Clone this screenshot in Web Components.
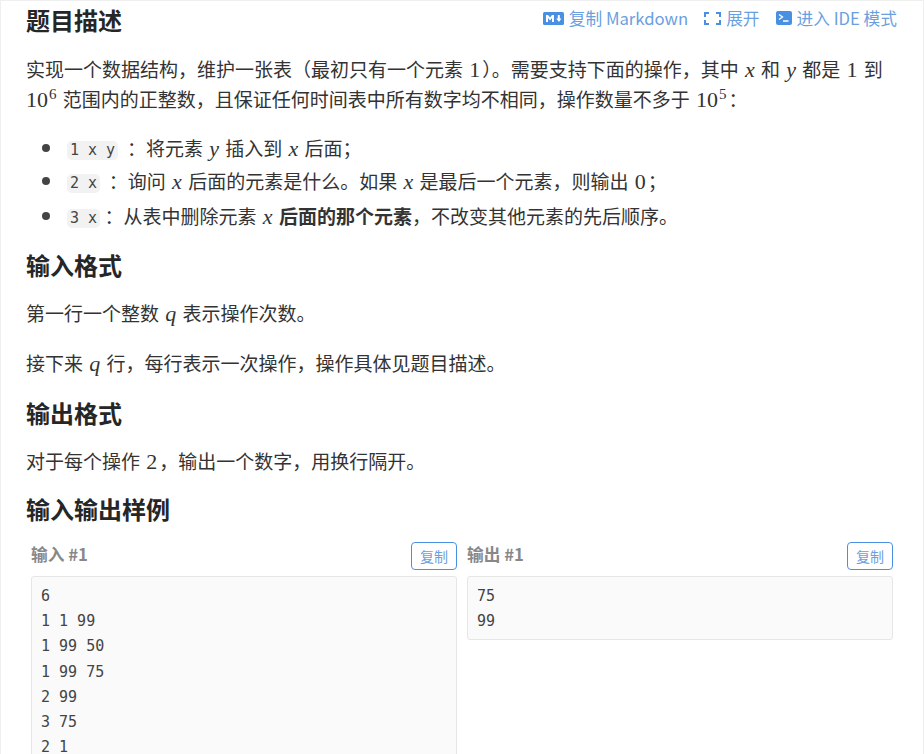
<!DOCTYPE html>
<html lang="zh">
<head>
<meta charset="utf-8">
<title>题目描述</title>
<style>
  html, body { margin: 0; height: 754px; overflow: hidden; background: #efefef; }
  body { font-family: "Noto Sans CJK SC", sans-serif; color: #333; }
</style>
</head>
<body>
<lg-card>
  <lg-heading style="--top:2px;--bottom:17px">题目描述
    <lg-action slot="actions" icon="md">复制 Markdown</lg-action>
    <lg-action slot="actions" icon="expand">展开</lg-action>
    <lg-action slot="actions" icon="term">进入 IDE 模式</lg-action>
  </lg-heading>
  <lg-para style="--after:18px">实现一个数据结构，维护一张表（最初只有一个元素 <lg-math upright>1</lg-math>）。需要支持下面的操作，其中 <lg-math>x</lg-math> 和 <lg-math>y</lg-math> 都是 <lg-math upright>1</lg-math> 到 <lg-math upright style="padding-left:0">10<sup>6</sup></lg-math> 范围内的正整数，且保证任何时间表中所有数字均不相同，操作数量不多于 <lg-math upright>10<sup>5</sup></lg-math>：</lg-para>
  <lg-bullets>
    <lg-bullet><lg-code>1 x y</lg-code> ：将元素 <lg-math>y</lg-math> 插入到 <lg-math>x</lg-math> 后面；</lg-bullet>
    <lg-bullet style="--shift:-1px"><lg-code>2 x</lg-code> ：询问 <lg-math>x</lg-math> 后面的元素是什么。如果 <lg-math>x</lg-math> 是最后一个元素，则输出 <lg-math upright>0</lg-math>；</lg-bullet>
    <lg-bullet style="--shift:1px"><lg-code>3 x</lg-code>：从表中删除元素 <lg-math>x</lg-math> <b>后面的那个元素</b>，不改变其他元素的先后顺序。</lg-bullet>
  </lg-bullets>
  <lg-heading style="--bottom:16px">输入格式</lg-heading>
  <lg-para>第一行一个整数 <lg-math>q</lg-math> 表示操作次数。</lg-para>
  <lg-para>接下来 <lg-math>q</lg-math> 行，每行表示一次操作，操作具体见题目描述。</lg-para>
  <lg-heading style="--top:-1px;--bottom:16px">输出格式</lg-heading>
  <lg-para>对于每个操作 <lg-math upright>2</lg-math>，输出一个数字，用换行隔开。</lg-para>
  <lg-heading style="--top:-3.5px;--bottom:16px">输入输出样例</lg-heading>
  <lg-samples>
    <lg-sample title="输入 #1" tall>6
1 1 99
1 99 50
1 99 75
2 99
3 75
2 1</lg-sample>
    <lg-sample title="输出 #1">75
99</lg-sample>
  </lg-samples>
</lg-card>

<script>
  // small helper: every element gets an open shadow root from a string
  class Base extends HTMLElement {
    constructor() {
      super();
      this.attachShadow({ mode: 'open' });
    }
    connectedCallback() {
      this.shadowRoot.innerHTML = this.markup();
    }
  }

  customElements.define('lg-card', class extends Base {
    markup() {
      return `<style>
        :host { display: block; box-sizing: border-box; margin: 1px 1px 0 1px; padding: 0 26px 0 25px;
                height: 753px; overflow: hidden; background: #fff; }
      </style><slot></slot>`;
    }
  });

  const ICONS = {
    md: `<svg width="21" height="13" viewBox="0 0 21 13"><rect width="21" height="13" rx="1.5" fill="#4a90e2"/>
      <path d="M3 10V3h2l2 2.6L9 3h2v7H9V6L7 8.6 5 6v4zM13.2 6.5h1.6V3h2v3.5h1.6L16 10z" fill="#fff"/></svg>`,
    expand: `<svg width="17" height="13" viewBox="0 0 17 13" fill="none" stroke="#4a90e2" stroke-width="2"><path d="M5 1H1v4M12 1h4v4M5 12H1V8M12 12h4V8"/></svg>`,
    term: `<svg width="16" height="14" viewBox="0 0 16 14"><rect width="16" height="14" rx="2" fill="#4a90e2"/>
      <path d="M3 3.5 6.5 6 3 8.5M7 10h5.5" fill="none" stroke="#fff" stroke-width="1.3"/></svg>`,
  };

  customElements.define('lg-action', class extends Base {
    markup() {
      return `<style>
        :host { display: inline-flex; align-items: center; gap: 5px; font-size: 16.7px; font-weight: 400;
                line-height: 24px; color: #6a9fe0; white-space: nowrap; }
        svg { display: block; }
      </style>${ICONS[this.getAttribute('icon')]}<slot></slot>`;
    }
  });

  customElements.define('lg-heading', class extends Base {
    markup() {
      return `<style>
        :host { display: flex; justify-content: space-between; align-items: flex-start;
                font-size: 24px; font-weight: 700; line-height: 34px; color: #262626;
                margin: var(--top, 0) 0 var(--bottom, 13px) 0; }
        .acts { display: flex; gap: 16px; padding: 3px 0 0 0; }
      </style><span><slot></slot></span><span class="acts"><slot name="actions"></slot></span>`;
    }
  });

  customElements.define('lg-para', class extends Base {
    markup() {
      return `<style>
        :host { display: block; font-size: 19px; line-height: 29.5px; color: #333; margin-bottom: var(--after, 20px); }
      </style><slot></slot>`;
    }
  });

  customElements.define('lg-math', class extends Base {
    markup() {
      return `<style>
        :host { font-family: "Liberation Serif", serif; font-size: 22px; line-height: 1; padding: 0 2px;
                font-style: ${this.hasAttribute('upright') ? 'normal' : 'italic'}; }
        ::slotted(sup) { font-size: 15px; line-height: 0; vertical-align: 8px; margin-left: 1px; }
      </style><slot></slot>`;
    }
  });

  customElements.define('lg-code', class extends Base {
    markup() {
      return `<style>
        :host { display: inline-block; font-family: "DejaVu Sans Mono", monospace; font-size: 15px;
                line-height: 19px; padding: 0 3px; background: #f2f2f2; border-radius: 5px;
                color: #444; margin-right: 4.5px; vertical-align: 1px; }
      </style><slot></slot>`;
    }
  });

  customElements.define('lg-bullets', class extends Base {
    markup() {
      return `<style>
        :host { display: block; margin: 0 0 15px 0; }
      </style><slot></slot>`;
    }
  });

  customElements.define('lg-bullet', class extends Base {
    markup() {
      return `<style>
        :host { display: flex; align-items: center; font-size: 19px; line-height: 29.5px; height: 34px; color: #333;
                margin-top: var(--shift, 0); }
        i { flex: none; width: 8px; height: 8px; border-radius: 50%; background: #444; margin: 0 17px 0 16px; }
        span { white-space: pre-wrap; }
      </style><i></i><span><slot></slot></span>`;
    }
  });

  customElements.define('lg-samples', class extends Base {
    markup() {
      return `<style>
        :host { display: grid; grid-template-columns: 426px 426px; gap: 10px; align-items: start;
                margin: 0 0 0 5px; }
      </style><slot></slot>`;
    }
  });

  customElements.define('lg-sample', class extends Base {
    markup() {
      return `<style>
        :host { display: block; }
        header { display: flex; justify-content: space-between; align-items: center; height: 28px; margin-bottom: 6px; }
        h3 { margin: -4px 0 0 0; font-size: 16.7px; font-weight: 700; color: #888; }
        button { font: inherit; font-size: 14px; line-height: 20px; width: 46px; height: 28px; padding: 0; background: #fff;
                 color: #6a9fe0; border: 1px solid #4a90e2; border-radius: 4px; }
        pre { margin: 0; padding: 7px 9px 5px; background: #fafafa; border: 1px solid #e6e6e6; border-radius: 3px;
              font: 15px/25.2px "DejaVu Sans Mono", monospace; color: #444; }
        pre.tall { padding-bottom: 30px; }
      </style>
      <header><h3>${this.getAttribute('title')}</h3><button>复制</button></header>
      <pre class="${this.hasAttribute('tall') ? 'tall' : ''}"><slot></slot></pre>`;
    }
  });
</script>
</body>
</html>
